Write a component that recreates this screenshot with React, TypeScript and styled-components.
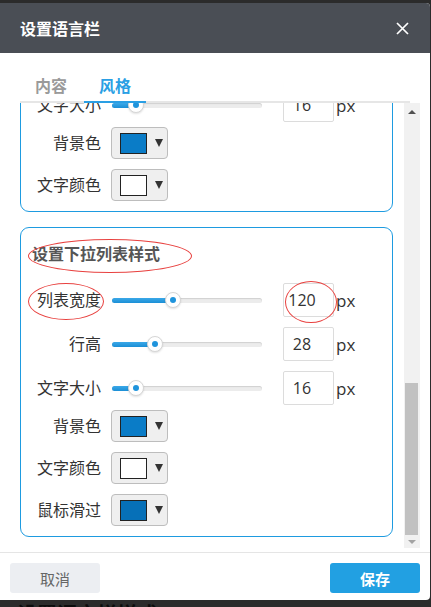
import { useLayoutEffect, useRef } from 'react';
import styled, { createGlobalStyle } from 'styled-components';

const GlobalStyle = createGlobalStyle`
  html, body {
    margin: 0;
    padding: 0;
    background: #2b2b2b;
    overflow: hidden;
  }
  body {
    font-family: "Open Sans", "Noto Sans CJK SC", sans-serif;
  }
  * {
    box-sizing: border-box;
  }
`;

const Page = styled.div`
  padding-top: 3px;
`;

const Dialog = styled.div`
  width: 430px;
  height: 597px;
  background: #fff;
  border-radius: 0 4px 4px 0;
  overflow: hidden;
  display: flex;
  flex-direction: column;
`;

const Header = styled.div`
  height: 50px;
  flex-shrink: 0;
  background: #4a4e55;
  display: flex;
  align-items: center;
  justify-content: space-between;
  padding: 0 21px 0 20px;
`;

const Title = styled.h2`
  margin: 0;
  color: #fff;
  font-size: 16px;
  font-weight: 700;
`;

const CloseButton = styled.button`
  border: 0;
  background: none;
  padding: 0;
  width: 13px;
  height: 13px;
  display: flex;
`;

const Tabs = styled.div`
  margin: 18px 20px 0;
  display: flex;
  border-bottom: 2px solid #e6e6e6;
  flex-shrink: 0;
`;

const Tab = styled.div<{ $active?: boolean }>`
  padding: 0 15px;
  margin-right: 2px;
  margin-bottom: -2px;
  line-height: 30px;
  font-size: 16px;
  font-weight: 700;
  color: ${({ $active }) => ($active ? '#2a9fe4' : '#9a9a9a')};
  border-bottom: 2px solid ${({ $active }) => ($active ? '#2a9fe4' : 'transparent')};
`;

const BodyRow = styled.div`
  height: 445px;
  margin: 0 10px 0 20px;
  display: flex;
`;

const Viewport = styled.div`
  flex: 1;
  overflow: hidden;
`;

const ScrollContent = styled.div`
  padding: 0 11px 11px 0;
`;

const Scrollbar = styled.div`
  width: 16px;
  background: #f1f1f1;
  display: flex;
  flex-direction: column;
`;

const Arrow = styled.div<{ $dir: 'up' | 'down'; $muted?: boolean }>`
  height: ${({ $dir }) => ($dir === 'up' ? '17px' : '13px')};
  display: flex;
  align-items: center;
  justify-content: center;

  &::before {
    content: '';
    border-left: 4px solid transparent;
    border-right: 4px solid transparent;
    ${({ $dir, $muted }) =>
      $dir === 'up'
        ? `border-bottom: 4px solid ${$muted ? '#a3a3a3' : '#505050'};`
        : `border-top: 4px solid ${$muted ? '#a3a3a3' : '#505050'};`}
  }
`;

const Track = styled.div`
  flex: 1;
  display: flex;
  flex-direction: column;
  justify-content: flex-end;
`;

const Thumb = styled.div`
  height: 152px;
  margin: 0 2px 0 1px;
  background: #c1c1c1;
`;

const Fieldset = styled.div`
  border: 1px solid #1e9be0;
  border-radius: 9px;
  padding: 16px 0 10px;
  margin-bottom: 15px;

  &:last-child {
    margin-bottom: 0;
  }
`;

const Legend = styled.div`
  position: relative;
  padding-left: 11px;
  font-size: 16px;
  line-height: 20px;
  font-weight: 700;
  color: #555;
  margin-bottom: 19px;
`;

const Ellipse = styled.span<{ $l: number; $t: number; $w: number; $h: number }>`
  position: absolute;
  left: ${({ $l }) => $l}px;
  top: ${({ $t }) => $t}px;
  width: ${({ $w }) => $w}px;
  height: ${({ $h }) => $h}px;
  border: 1px solid #e8413f;
  border-radius: 50%;
  pointer-events: none;
`;

const Group = styled.div`
  display: flex;
  flex-direction: column;
  gap: 10px;
  margin-bottom: 5px;

  &:last-child {
    margin-bottom: 0;
  }
`;

const Row = styled.div`
  display: flex;
  align-items: center;
`;

const Label = styled.div<{ $tall?: boolean }>`
  position: relative;
  width: 80px;
  text-align: right;
  font-size: 16px;
  line-height: ${({ $tall }) => ($tall ? '34px' : '32px')};
  color: #333;
  white-space: nowrap;
`;

const SliderBox = styled.div`
  position: relative;
  width: 150px;
  height: 16px;
  margin-left: 11px;
  display: flex;
  align-items: center;
`;

const SliderTrack = styled.div`
  width: 100%;
  height: 5px;
  border-radius: 3px;
  background: #ececec;
  box-shadow: inset 0 1px 1px rgba(0, 0, 0, 0.12);
  overflow: hidden;
`;

const SliderFill = styled.div`
  height: 100%;
  background: linear-gradient(#3ba8e8, #1b8fd6);
`;

const SliderThumb = styled.div`
  position: absolute;
  top: 0;
  width: 16px;
  height: 16px;
  margin-left: -8px;
  border-radius: 50%;
  background: #fff;
  border: 1px solid #d6d6d6;
  box-shadow: 0 1px 2px rgba(0, 0, 0, 0.12);
  display: flex;
  align-items: center;
  justify-content: center;

  &::after {
    content: '';
    width: 6px;
    height: 6px;
    border-radius: 50%;
    background: #1f94dc;
  }
`;

const InputBox = styled.div`
  position: relative;
  margin-left: 21px;
`;

const NumberInput = styled.input`
  display: block;
  width: 51px;
  height: 34px;
  border: 1px solid #dcdcdc;
  border-radius: 2px;
  padding: 0 13px 0 0;
  text-align: center;
  font-family: "Open Sans", "Noto Sans CJK SC", sans-serif;
  font-size: 16px;
  color: #333;
  background: #fff;
  outline: none;
`;

const Unit = styled.span`
  margin-left: 2px;
  font-size: 17px;
  color: #333;
`;

const ColorButton = styled.button`
  margin-left: 10px;
  width: 57px;
  height: 32px;
  border: 1px solid #bdbdbd;
  border-radius: 4px;
  background: #efefef;
  padding: 0 0 0 8px;
  display: flex;
  align-items: center;
`;

const Swatch = styled.span<{ $color: string }>`
  width: 27px;
  height: 21px;
  border: 1px solid #222;
  background: ${({ $color }) => $color};
`;

const Caret = styled.span`
  margin-left: 8px;
  border-left: 4px solid transparent;
  border-right: 4px solid transparent;
  border-top: 8px solid #333;
`;

const Footer = styled.div`
  margin-top: 4px;
  border-top: 1px solid #e5e5e5;
  padding: 10px 10px 7px;
  display: flex;
  justify-content: space-between;
`;

const Button = styled.button<{ $primary?: boolean }>`
  width: 90px;
  height: 30px;
  border: 0;
  border-radius: 3px;
  font-family: "Open Sans", "Noto Sans CJK SC", sans-serif;
  font-size: 15px;
  font-weight: ${({ $primary }) => ($primary ? 700 : 400)};
  color: ${({ $primary }) => ($primary ? '#fff' : '#666')};
  background: ${({ $primary }) => ($primary ? '#22a0e2' : '#eceef2')};
`;

const Behind = styled.div`
  padding: 4px 0 0 17px;
  font-size: 20px;
  line-height: 22px;
  font-weight: 700;
  color: #0c0c0c;
`;

interface SliderRowProps {
  label: string;
  value: number;
  pct: number;
  markLabel?: boolean;
  markValue?: boolean;
}

function SliderRow({ label, value, pct, markLabel, markValue }: SliderRowProps) {
  return (
    <Row>
      <Label $tall>
        {label}
        {markLabel && <Ellipse $l={7} $t={0} $w={76} $h={37} />}
      </Label>
      <SliderBox>
        <SliderTrack>
          <SliderFill style={{ width: `${pct}%` }} />
        </SliderTrack>
        <SliderThumb style={{ left: `${pct}%` }} />
      </SliderBox>
      <InputBox>
        <NumberInput defaultValue={value} />
        {markValue && <Ellipse $l={2} $t={-2} $w={52} $h={42} />}
      </InputBox>
      <Unit>px</Unit>
    </Row>
  );
}

function ColorRow({ label, color }: { label: string; color: string }) {
  return (
    <Row>
      <Label>{label}</Label>
      <ColorButton>
        <Swatch $color={color} />
        <Caret />
      </ColorButton>
    </Row>
  );
}

export default function App() {
  const viewportRef = useRef<HTMLDivElement>(null);

  // the panel is shown scrolled to its end
  useLayoutEffect(() => {
    const el = viewportRef.current;
    if (el) el.scrollTop = el.scrollHeight;
  }, []);

  return (
    <Page>
      <GlobalStyle />
      <Dialog>
        <Header>
          <Title>设置语言栏</Title>
          <CloseButton aria-label="关闭">
            <svg width="13" height="13" viewBox="0 0 13 13">
              <path d="M1 1L12 12M12 1L1 12" stroke="#fff" strokeWidth="1.7" />
            </svg>
          </CloseButton>
        </Header>
        <Tabs>
          <Tab>内容</Tab>
          <Tab $active>风格</Tab>
        </Tabs>
        <BodyRow>
          <Viewport ref={viewportRef}>
            <ScrollContent>
              <Fieldset>
                <Legend>设置语言栏样式</Legend>
                <Group>
                  <SliderRow label="宽度" value={120} pct={40} />
                  <SliderRow label="高度" value={30} pct={30} />
                  <SliderRow label="文字大小" value={16} pct={16} />
                </Group>
                <Group>
                  <ColorRow label="背景色" color="#0a7cc7" />
                  <ColorRow label="文字颜色" color="#ffffff" />
                </Group>
              </Fieldset>
              <Fieldset>
                <Legend>
                  设置下拉列表样式
                  <Ellipse $l={7} $t={-5} $w={164} $h={34} />
                </Legend>
                <Group>
                  <SliderRow label="列表宽度" value={120} pct={40.7} markLabel markValue />
                  <SliderRow label="行高" value={28} pct={28.7} />
                  <SliderRow label="文字大小" value={16} pct={16} />
                </Group>
                <Group>
                  <ColorRow label="背景色" color="#0a7cc7" />
                  <ColorRow label="文字颜色" color="#ffffff" />
                  <ColorRow label="鼠标滑过" color="#0670b8" />
                </Group>
              </Fieldset>
            </ScrollContent>
          </Viewport>
          <Scrollbar>
            <Arrow $dir="up" />
            <Track>
              <Thumb />
            </Track>
            <Arrow $dir="down" $muted />
          </Scrollbar>
        </BodyRow>
        <Footer>
          <Button>取消</Button>
          <Button $primary>保存</Button>
        </Footer>
      </Dialog>
      <Behind>设置语言栏样式</Behind>
    </Page>
  );
}
